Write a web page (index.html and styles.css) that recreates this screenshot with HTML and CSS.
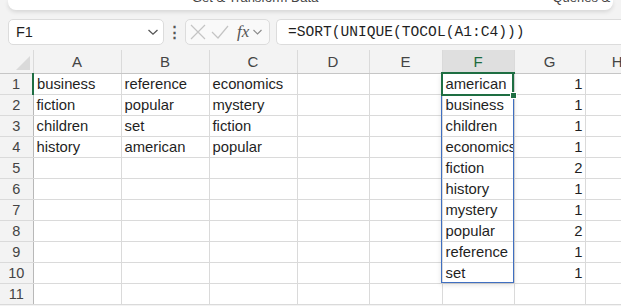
FILE: index.html
```html
<!DOCTYPE html>
<html lang="en">
<head>
    <meta charset="UTF-8">
    <title>Sheet</title>
    <link rel="stylesheet" href="styles.css">
</head>
<body>
    <div class="ribbon">
        <span class="ribbon-label get">Get &amp; Transform Data</span>
        <span class="ribbon-sep"></span>
        <span class="ribbon-label queries">Queries &amp; Connections</span>
    </div>
    <div class="formula-bar">
        <div class="name-box">
            <span>F1</span>
            <svg width="12" height="8" viewBox="0 0 12 8"><path d="M1.5 2 L6 6.2 L10.5 2" fill="none" stroke="#555" stroke-width="1.3"/></svg>
        </div>
        <div class="dots">⋮</div>
        <div class="fx-box">
            <svg width="18" height="18" viewBox="0 0 18 18"><path d="M2 2 L16 16 M16 2 L2 16" stroke="#c4c4c4" stroke-width="1.2"/></svg>
            <svg width="20" height="18" viewBox="0 0 20 18"><path d="M2 9 L8 15 L18 3" fill="none" stroke="#c4c4c4" stroke-width="1.2"/></svg>
            <span class="fx">fx</span>
            <svg width="11" height="8" viewBox="0 0 11 8"><path d="M1.5 2 L5.5 6 L9.5 2" fill="none" stroke="#8a8a8a" stroke-width="1.1"/></svg>
        </div>
        <div class="formula-input">=SORT(UNIQUE(TOCOL(A1:C4)))</div>
    </div>
    <div class="sheet">
        <table class="grid">
            <colgroup>
                <col class="c-row"><col class="c-wide"><col class="c-wide"><col class="c-wide">
                <col class="c-d"><col class="c-e"><col class="c-f"><col class="c-g"><col class="c-h">
            </colgroup>
            <thead>
                <tr>
                    <th class="corner"><span class="corner-tri"></span></th>
                    <th>A</th><th>B</th><th>C</th><th>D</th><th>E</th><th class="active">F</th><th>G</th><th>H</th>
                </tr>
            </thead>
            <tbody>
                <tr><th class="row-active">1</th><td>business</td><td>reference</td><td>economics</td><td></td><td></td><td>american</td><td class="num">1</td><td></td></tr>
                <tr><th>2</th><td>fiction</td><td>popular</td><td>mystery</td><td></td><td></td><td>business</td><td class="num">1</td><td></td></tr>
                <tr><th>3</th><td>children</td><td>set</td><td>fiction</td><td></td><td></td><td>children</td><td class="num">1</td><td></td></tr>
                <tr><th>4</th><td>history</td><td>american</td><td>popular</td><td></td><td></td><td class="clip">economics</td><td class="num">1</td><td></td></tr>
                <tr><th>5</th><td></td><td></td><td></td><td></td><td></td><td>fiction</td><td class="num">2</td><td></td></tr>
                <tr><th>6</th><td></td><td></td><td></td><td></td><td></td><td>history</td><td class="num">1</td><td></td></tr>
                <tr><th>7</th><td></td><td></td><td></td><td></td><td></td><td>mystery</td><td class="num">1</td><td></td></tr>
                <tr><th>8</th><td></td><td></td><td></td><td></td><td></td><td>popular</td><td class="num">2</td><td></td></tr>
                <tr><th>9</th><td></td><td></td><td></td><td></td><td></td><td>reference</td><td class="num">1</td><td></td></tr>
                <tr><th>10</th><td></td><td></td><td></td><td></td><td></td><td>set</td><td class="num">1</td><td></td></tr>
                <tr><th>11</th><td></td><td></td><td></td><td></td><td></td><td></td><td></td><td></td></tr>
            </tbody>
        </table>
        <div class="spill"></div>
        <div class="selection"><span class="handle"></span></div>
    </div>
</body>
</html>
```

FILE: styles.css
```css
body {
    margin: 0;
    background: #f3f3f3;
    font-family: "Liberation Sans", Arial, sans-serif;
    color: #1f1f1f;
    width: 621px;
    height: 306px;
    overflow: hidden;
}
.ribbon {
    height: 10px;
    margin: 0 8px;
    background: white;
    border-radius: 0 0 8px 8px;
    box-shadow: 0 2px 4px rgba(0, 0, 0, 0.12);
    display: flex;
    align-items: flex-end;
    position: relative;
    overflow: hidden;
}
.ribbon-label {
    font-size: 13px;
    color: #444;
    line-height: 13px;
    margin-bottom: 6px;
    white-space: nowrap;
}
.get {
    margin-left: 184px;
}
.ribbon-sep {
    width: 1px;
    height: 6px;
    background: #c8c8c8;
    margin-left: 180px;
    align-self: center;
}
.queries {
    margin-left: 54px;
}
.formula-bar {
    display: flex;
    align-items: stretch;
    margin-top: 9px;
    padding-left: 8px;
    height: 26px;
}
.name-box {
    width: 156px;
    background: white;
    border: 1px solid #dcdcdc;
    border-radius: 5px;
    display: flex;
    align-items: center;
    justify-content: space-between;
    padding: 0 4px 0 7px;
    box-sizing: border-box;
    font-size: 14.5px;
}
.dots {
    width: 21px;
    text-align: center;
    font-size: 15px;
    line-height: 26px;
    color: #555;
    font-weight: bold;
}
.fx-box {
    width: 85px;
    background: #f9f9f9;
    border: 1px solid #dcdcdc;
    border-radius: 5px;
    box-sizing: border-box;
    display: flex;
    align-items: center;
    gap: 3px;
    padding-left: 3px;
}
.fx {
    font-family: "Liberation Serif", serif;
    font-style: italic;
    font-size: 17px;
    color: #555;
    margin-left: 4px;
}
.formula-input {
    flex: 1;
    margin-left: 6px;
    background: white;
    border: 1px solid #dcdcdc;
    border-right: none;
    border-radius: 5px 0 0 5px;
    font-family: "Liberation Mono", monospace;
    font-size: 14.6px;
    line-height: 24px;
    padding-left: 11px;
    color: #1f1f1f;
}
.sheet {
    position: relative;
    margin-top: 5px;
}
.grid {
    border-collapse: collapse;
    table-layout: fixed;
    width: 649px;
}
.c-row { width: 33px; }
.c-wide { width: 88px; }
.c-d { width: 72px; }
.c-e { width: 73px; }
.c-f { width: 72px; }
.c-g { width: 71px; }
.c-h { width: 64px; }
thead th {
    height: 22px;
    font-weight: normal;
    font-size: 15px;
    color: #444;
    border-left: 1px solid #dadada;
    border-bottom: 1px solid #c6c6c6;
    padding: 0;
    background: #f3f3f3;
}
thead th.corner {
    border-left: none;
    position: relative;
}
.corner-tri {
    position: absolute;
    right: 3px;
    bottom: 3px;
    width: 0;
    height: 0;
    border-left: 14px solid transparent;
    border-bottom: 14px solid #dadada;
}
thead th.active {
    background: #dfdfdf;
    color: #1b6a3c;
    border-bottom: 2px solid #1e6e42;
}
tbody th {
    height: 20px;
    font-weight: normal;
    font-size: 14.5px;
    color: #444;
    border-right: 1px solid #b8b8b8;
    border-bottom: 1px solid #dadada;
    background: #f3f3f3;
    padding: 0;
    text-align: center;
}
tbody th.row-active {
    border-right: 2px solid #1e6e42;
}
td {
    height: 20px;
    background: white;
    border: 1px solid #dadada;
    border-top: none;
    font-size: 14.8px;
    padding: 0 3px;
    white-space: nowrap;
    overflow: visible;
    vertical-align: bottom;
    line-height: 19px;
}
td.clip {
    overflow: hidden;
    text-overflow: clip;
}
td.num {
    text-align: right;
    padding-right: 2px;
}
.spill {
    position: absolute;
    left: 441px;
    top: 23px;
    width: 73px;
    height: 210px;
    border: 1px solid #3f6fc1;
    box-sizing: border-box;
    box-shadow: 0 2px 5px rgba(0, 0, 0, 0.12);
    pointer-events: none;
}
.selection {
    position: absolute;
    left: 441px;
    top: 22px;
    width: 73px;
    height: 24px;
    border: 2px solid #1e6e42;
    box-sizing: border-box;
}
.handle {
    position: absolute;
    right: -5px;
    bottom: -5px;
    width: 5px;
    height: 5px;
    background: #1e6e42;
    border: 1px solid white;
}
```
